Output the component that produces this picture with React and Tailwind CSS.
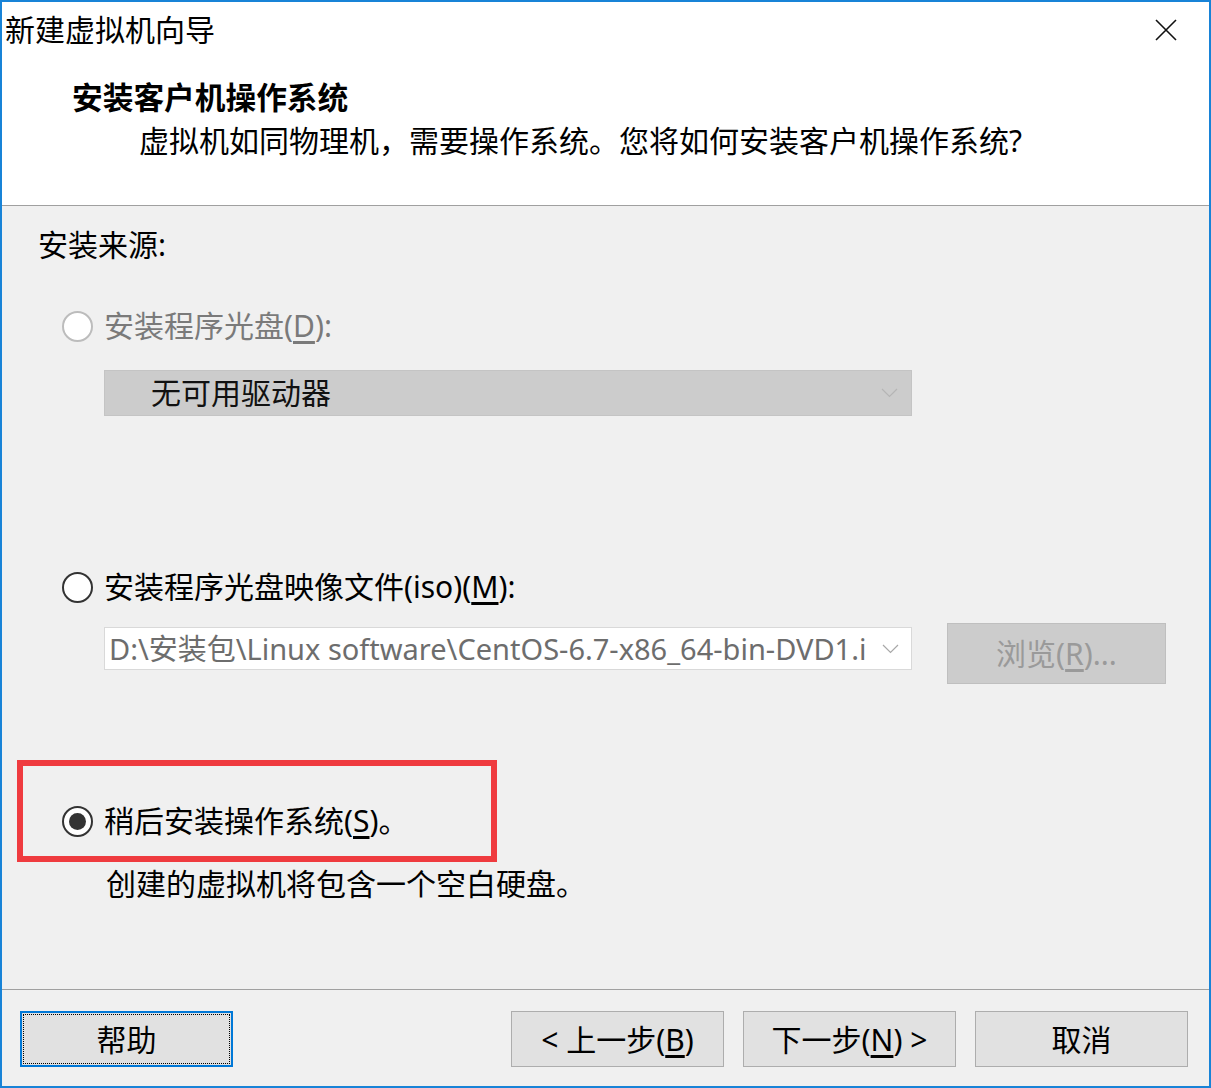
import React from 'react'

const fontStack = "font-['Noto_Sans','Noto_Sans_CJK_SC',sans-serif]"

function Radio({ checked, disabled }) {
  return (
    <span
      className={`w-[31px] h-[31px] shrink-0 rounded-full border-2 flex items-center justify-center bg-white ${
        disabled ? 'border-[#bcbcbc]' : 'border-[#333333]'
      }`}
    >
      {checked && <span className="w-[17px] h-[17px] rounded-full bg-[#333333]" />}
    </span>
  )
}

function Chevron({ color }) {
  return (
    <svg width="17" height="10" viewBox="0 0 17 10" fill="none">
      <path d="M1 1 L8.5 8.5 L16 1" stroke={color} strokeWidth="1.2" />
    </svg>
  )
}

function Btn({ children, focused }) {
  if (focused) {
    return (
      <button className="w-[213px] h-[56px] border-2 border-[#0078d7] bg-[#e1e1e1] p-[1px]">
        <span className="w-full h-full flex items-center justify-center border border-dotted border-black text-[30px] text-black">
          {children}
        </span>
      </button>
    )
  }
  return (
    <button className="w-[213px] h-[56px] border border-[#adadad] bg-[#e1e1e1] flex items-center justify-center text-[30px] text-black">
      {children}
    </button>
  )
}

export default function App() {
  return (
    <div
      className={`w-[1211px] h-[1088px] border-2 border-[#1883d7] flex flex-col bg-[#f0f0f0] text-black ${fontStack}`}
    >
      {/* Header */}
      <div className="h-[204px] shrink-0 bg-white border-b border-[#a0a0a0] flex flex-col">
        <div className="mt-[8px] flex items-center justify-between pl-[3px] pr-[31px]">
          <span className="text-[30px] leading-[40px]">新建虚拟机向导</span>
          <svg width="24" height="24" viewBox="0 0 24 24" fill="none">
            <path d="M2 2 L22 22 M22 2 L2 22" stroke="#111" strokeWidth="1.6" />
          </svg>
        </div>
        <div className="mt-[27px] pl-[70px] text-[30.7px] leading-[40px] font-bold">安装客户机操作系统</div>
        <div className="mt-[4px] pl-[137px] text-[30px] leading-[40px]">
          虚拟机如同物理机，需要操作系统。您将如何安装客户机操作系统?
        </div>
      </div>

      {/* Body */}
      <div className="flex-1 flex flex-col text-[30px] leading-[40px]">
        <div className="mt-[19px] pl-[36px]">安装来源:</div>

        <div className="mt-[41px] pl-[60px] flex items-center gap-[11px] h-[40px]">
          <Radio disabled />
          <span className="text-[#7a7a7a]">
            安装程序光盘(<span className="underline underline-offset-4">D</span>):
          </span>
        </div>

        <div className="mt-[24px] ml-[102px] w-[808px] h-[46px] bg-[#cccccc] border border-[#c4c4c4] flex items-center">
          <span className="pl-[46px] flex-1 text-[#111]">无可用驱动器</span>
          <span className="pr-[13px] flex items-center">
            <Chevron color="#b5b5b5" />
          </span>
        </div>

        <div className="mt-[151px] pl-[60px] flex items-center gap-[11px] h-[40px]">
          <Radio />
          <span>
            安装程序光盘映像文件(iso)(<span className="underline underline-offset-4">M</span>):
          </span>
        </div>

        <div className="mt-[16px] ml-[102px] flex items-start">
          <div className="mt-[4px] w-[808px] h-[43px] bg-white border border-[#d9d9d9] flex items-center">
            <span className="pl-[4px] whitespace-nowrap text-[29px] text-[#6d6d6d]">
              D:\安装包\Linux software\CentOS-6.7-x86_64-bin-DVD1.i
            </span>
            <span className="ml-auto pr-[12px] flex items-center">
              <Chevron color="#a8a8a8" />
            </span>
          </div>
          <div className="ml-[35px] w-[219px] h-[61px] bg-[#cccccc] border border-[#bfbfbf] flex items-center justify-center text-[#9a9a9a]">
            浏览(<span className="underline underline-offset-4">R</span>)...
          </div>
        </div>

        <div className="relative mt-[117px] pl-[60px] flex items-center gap-[11px] h-[40px]">
          <Radio checked />
          <span>
            稍后安装操作系统(<span className="underline underline-offset-4">S</span>)。
          </span>
          <div className="absolute left-[15px] top-[-41px] w-[480px] h-[102px] border-[6px] border-[#ef3b3f] pointer-events-none" />
        </div>

        <div className="mt-[23px] pl-[104px]">创建的虚拟机将包含一个空白硬盘。</div>
      </div>

      {/* Footer */}
      <div className="h-[97px] shrink-0 border-t border-[#a0a0a0] pt-[21px] pl-[18px] pr-[21px] flex items-start justify-between">
        <Btn focused>帮助</Btn>
        <div className="flex gap-[19px]">
          <Btn>
            &lt; 上一步(<span className="underline underline-offset-4">B</span>)
          </Btn>
          <Btn>
            下一步(<span className="underline underline-offset-4">N</span>) &gt;
          </Btn>
          <Btn>取消</Btn>
        </div>
      </div>
    </div>
  )
}
